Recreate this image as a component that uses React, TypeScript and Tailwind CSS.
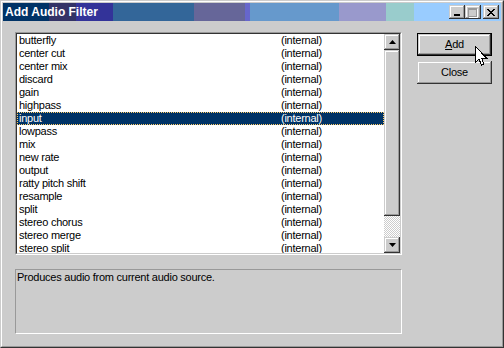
import React from 'react';

const filters = [
  'butterfly',
  'center cut',
  'center mix',
  'discard',
  'gain',
  'highpass',
  'input',
  'lowpass',
  'mix',
  'new rate',
  'output',
  'ratty pitch shift',
  'resample',
  'split',
  'stereo chorus',
  'stereo merge',
  'stereo split',
];

const raised =
  'shadow-[inset_-1px_-1px_#333333,inset_1px_1px_#cccccc,inset_-2px_-2px_#999999,inset_2px_2px_#ffffff]';

function TitleButton({ children }: { children: React.ReactNode }) {
  return (
    <div className={`w-[16px] h-[14px] bg-[#cccccc] flex items-center justify-center ${raised}`}>
      {children}
    </div>
  );
}

function Arrow({ down }: { down?: boolean }) {
  return (
    <svg width="7" height="4" viewBox="0 0 7 4">
      {down ? <path d="M0 0h7L3.5 4z" fill="#000" /> : <path d="M0 4h7L3.5 0z" fill="#000" />}
    </svg>
  );
}

function Cursor() {
  return (
    <svg className="absolute left-[474px] top-[45px]" width="13" height="21" viewBox="0 0 13 21">
      <path
        d="M0.5 0.5v16l3.5-3.5 2.5 6 2.5-1-2.5-6h5z"
        fill="#ffffff"
        stroke="#000000"
        strokeWidth="1"
        shapeRendering="crispEdges"
      />
    </svg>
  );
}

export default function App() {
  return (
    <div
      className="relative w-[504px] h-[348px] bg-[#cccccc] border border-t-[#cccccc] border-l-[#cccccc] border-r-[#333333] border-b-[#333333] text-[11px] tracking-[-0.25px] text-black"
      style={{ fontFamily: '"Liberation Sans", Arial, sans-serif' }}
    >
      <div className="w-full h-full border border-t-white border-l-white border-r-[#999999] border-b-[#999999] p-px flex flex-col">
        {/* title bar */}
        <div className="h-[18px] flex items-center justify-between pl-[2px] pr-[2px] bg-[linear-gradient(to_right,#003366_0px,#003366_46px,#333366_46px,#333366_73px,#333399_73px,#333399_110px,#336699_110px,#336699_191px,#666699_191px,#666699_242px,#6666cc_242px,#6666cc_247px,#6699cc_247px,#6699cc_336px,#9999cc_336px,#9999cc_383px,#99cccc_383px,#99cccc_411px,#99ccff_411px)]">
          <span className="text-white font-bold text-[12px] tracking-normal leading-none">Add Audio Filter</span>
          <div className="flex items-center">
            <TitleButton>
              <div className="w-[6px] h-[2px] bg-black mt-[6px] -ml-[1px]" />
            </TitleButton>
            <TitleButton>
              <div className="relative w-[9px] h-[9px] border border-t-2 border-[#999999] shadow-[1px_1px_#ffffff] -ml-[1px]" />
            </TitleButton>
            <div className="w-[2px]" />
            <TitleButton>
              <svg width="8" height="7" viewBox="0 0 8 7" className="-ml-[1px]" shapeRendering="crispEdges">
                <path d="M0 0h2v1h1v1h2V1h1V0h2v1H7v1H6v1H5v1h1v1h1v1h1v1H6V6H5V5H3v1H2v1H0V6h1V5h1V4h1V3H2V2H1V1H0z" fill="#000" />
              </svg>
            </TitleButton>
          </div>
        </div>

        {/* body */}
        <div className="flex pl-[12px] pt-[11px] gap-[15px]">
          <div className="flex flex-col gap-[14px]">
            {/* list box */}
            <div className="w-[387px] h-[223px] border border-t-[#999999] border-l-[#999999] border-r-white border-b-white">
              <div className="w-full h-full border border-t-[#333333] border-l-[#333333] border-r-[#cccccc] border-b-[#cccccc] bg-white flex overflow-hidden">
                <div className="flex-1 overflow-hidden">
                  {filters.map((name) => {
                    const sel = name === 'input';
                    return (
                      <div
                        key={name}
                        className={`h-[13px] flex items-center leading-none ${
                          sel ? 'bg-[#003366] text-white border border-dotted border-[#ffcc66] pl-px' : 'pl-[2px]'
                        }`}
                      >
                        <span className="w-[262px]">{name}</span>
                        <span>(internal)</span>
                      </div>
                    );
                  })}
                </div>
                {/* scroll bar */}
                <div className="w-[16px] flex flex-col">
                  <div className={`h-[16px] shrink-0 bg-[#cccccc] flex items-center justify-center ${raised}`}>
                    <Arrow />
                  </div>
                  <div className={`h-[166px] shrink-0 bg-[#cccccc] ${raised}`} />
                  <div className="flex-1 bg-[repeating-conic-gradient(#ffffff_0_25%,#cccccc_0_50%)] bg-[length:2px_2px]" />
                  <div className={`h-[16px] shrink-0 bg-[#cccccc] flex items-center justify-center ${raised}`}>
                    <Arrow down />
                  </div>
                </div>
              </div>
            </div>

            {/* description */}
            <div className="w-[387px] h-[65px] border border-t-[#999999] border-l-[#999999] border-r-white border-b-white px-px pt-px leading-[13px]">
              Produces audio from current audio source.
            </div>
          </div>

          {/* buttons */}
          <div className="flex flex-col gap-[5px] pt-px">
            <div className="w-[75px] h-[23px] border border-black">
              <div className={`w-full h-full bg-[#cccccc] flex items-center justify-center ${raised}`}>
                <span>
                  <span className="underline">A</span>dd
                </span>
              </div>
            </div>
            <div className={`w-[75px] h-[23px] bg-[#cccccc] flex items-center justify-center ${raised}`}>
              Close
            </div>
          </div>
        </div>
      </div>
      <Cursor />
    </div>
  );
}
